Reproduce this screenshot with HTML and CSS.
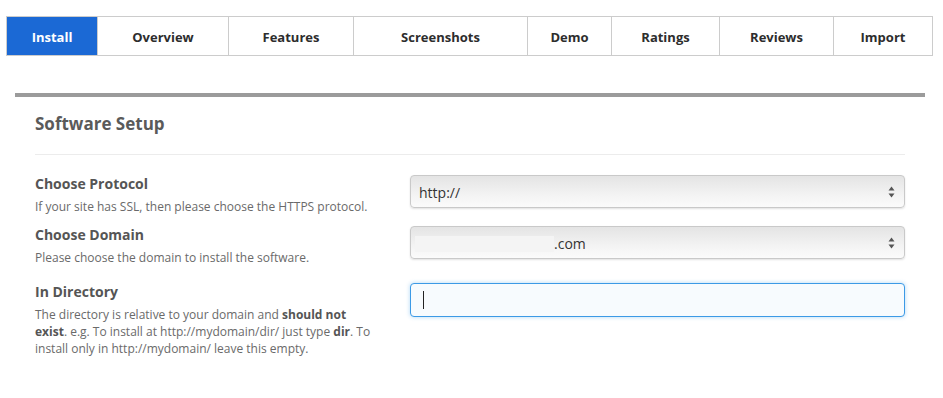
FILE: index.html
```html
<!DOCTYPE html>
<html lang="en">
<head>
<meta charset="utf-8">
<title>Software Setup</title>
<link rel="stylesheet" href="styles.css">
</head>
<body>
<nav class="tabs">
  <a class="tab active">Install</a>
  <a class="tab">Overview</a>
  <a class="tab">Features</a>
  <a class="tab">Screenshots</a>
  <a class="tab">Demo</a>
  <a class="tab">Ratings</a>
  <a class="tab">Reviews</a>
  <a class="tab last">Import</a>
</nav>

<section class="panel">
  <h2 class="title">Software Setup</h2>

  <div class="row row-first">
    <div class="label-col">
      <div class="label">Choose Protocol</div>
      <div class="desc">If your site has SSL, then please choose the HTTPS protocol.</div>
    </div>
    <div class="field-col">
      <div class="select">
        <span class="value">http://</span>
        <svg class="arrows" width="7" height="12" viewBox="0 0 7 12"><path d="M3.5 0.5 L6.5 4.5 L0.5 4.5 Z M3.5 11.5 L6.5 7.5 L0.5 7.5 Z" fill="#555"/></svg>
      </div>
    </div>
  </div>

  <div class="row">
    <div class="label-col">
      <div class="label">Choose Domain</div>
      <div class="desc">Please choose the domain to install the software.</div>
    </div>
    <div class="field-col">
      <div class="select">
        <span class="redacted"></span><span class="value">.com</span>
        <svg class="arrows" width="7" height="12" viewBox="0 0 7 12"><path d="M3.5 0.5 L6.5 4.5 L0.5 4.5 Z M3.5 11.5 L6.5 7.5 L0.5 7.5 Z" fill="#555"/></svg>
      </div>
    </div>
  </div>

  <div class="row row-last">
    <div class="label-col">
      <div class="label">In Directory</div>
      <div class="desc">The directory is relative to your domain and <b>should not exist</b>. e.g. To install at http://mydomain/dir/ just type <b>dir</b>. To install only in http://mydomain/ leave this empty.</div>
    </div>
    <div class="field-col">
      <div class="input"><span class="caret"></span></div>
    </div>
  </div>
</section>
</body>
</html>
```

FILE: styles.css
```css
html, body {
  margin: 0;
  padding: 0;
  background: #fff;
  font-family: "Open Sans", "Liberation Sans", sans-serif;
}

.tabs {
  display: grid;
  grid-template-columns: 91px 131px 125px 174px 84px 108px 114px 100px;
  margin: 16px 0 0 6px;
  width: 928px;
}

.tab {
  display: flex;
  align-items: center;
  justify-content: center;
  box-sizing: border-box;
  height: 40px;
  padding-top: 2px;
  border-top: 1px solid #ccc;
  border-bottom: 1px solid #ccc;
  border-left: 1px solid #ccc;
  font-size: 13px;
  font-weight: 700;
  color: #2d2d2d;
  background: #fff;
}

.tab.last {
  border-right: 1px solid #ccc;
}

.tab.active {
  background: #1b69d5;
  color: #fff;
}

.panel {
  margin: 37px 0 0 15px;
  width: 870px;
  padding: 0 20px;
  border-top: 4px solid #9b9b9b;
}

.title {
  margin: 0;
  padding: 15px 0 18px;
  font-size: 17px;
  line-height: 24px;
  font-weight: 700;
  color: #5a5a5a;
  border-bottom: 1px solid #ececec;
}

.row {
  display: flex;
  gap: 30px;
  margin-top: 10px;
}

.row-first {
  margin-top: 19px;
}

.row-last {
  margin-top: 16px;
}

.label-col {
  width: 345px;
}

.label {
  font-size: 14px;
  line-height: 20px;
  font-weight: 700;
  color: #555;
}

.desc {
  margin-top: 4px;
  font-size: 12px;
  line-height: 17px;
  color: #6a6a6a;
}

.desc b {
  font-weight: 700;
  color: #555;
}

.field-col {
  width: 495px;
  padding-top: 1px;
}

.select {
  display: flex;
  align-items: center;
  box-sizing: border-box;
  height: 33px;
  padding: 2px 8px 0 8px;
  border: 1px solid #c9c9c9;
  border-radius: 4px;
  background: linear-gradient(#e4e4e4, #f3f3f3 60%, #fbfbfb);
  box-shadow: 0 1px 2px rgba(0, 0, 0, 0.12);
  font-size: 14px;
  color: #333;
}

.select .value {
  flex: none;
}

.select .arrows {
  margin-left: auto;
  margin-right: 1px;
  margin-top: -2px;
}

.redacted {
  display: block;
  width: 139px;
  height: 16px;
  margin-left: -4px;
  background: #f4f4f4;
}

.input {
  display: flex;
  align-items: center;
  box-sizing: border-box;
  height: 34px;
  padding-left: 12px;
  border: 1px solid #3c9ae6;
  border-radius: 4px;
  background: #f7fbfe;
  box-shadow: 0 0 4px rgba(82, 168, 236, 0.45);
}

.caret {
  display: block;
  width: 1px;
  height: 18px;
  background: #222;
}
```
